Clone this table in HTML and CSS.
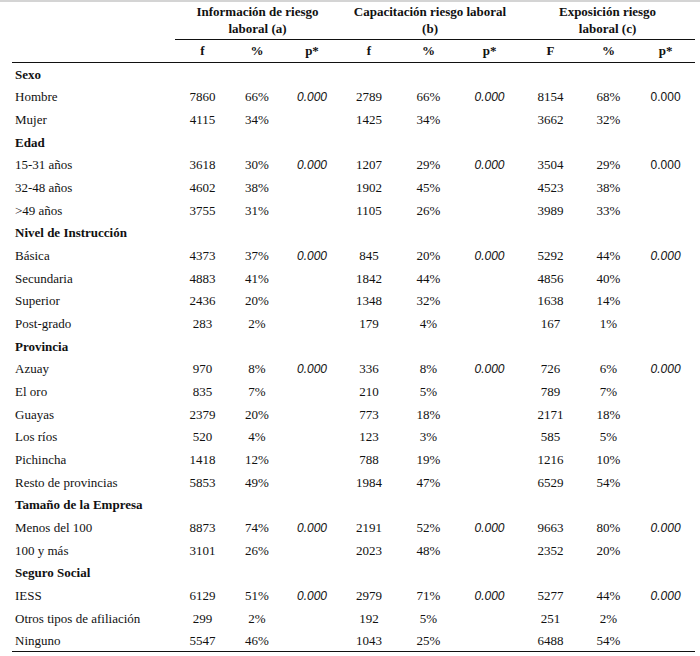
FILE: index.html
```html
<!DOCTYPE html>
<html lang="es">
<head>
<meta charset="utf-8">
<title>Tabla riesgo laboral</title>
<link rel="stylesheet" href="styles.css">
</head>
<body>
<div class="topline"></div>
<table class="tbl">
  <colgroup>
    <col class="c-label">
    <col class="c1"><col class="c2"><col class="c3">
    <col class="c4"><col class="c5"><col class="c6">
    <col class="c7"><col class="c8"><col class="c9">
  </colgroup>
  <thead>
    <tr class="group-row">
      <th class="blank"></th>
      <th colspan="3" class="group">Información de riesgo<br>laboral (a)</th>
      <th colspan="3" class="group">Capacitación riesgo laboral<br>(b)</th>
      <th colspan="3" class="group">Exposición riesgo<br>laboral (c)</th>
    </tr>
    <tr class="sub-row">
      <th></th>
      <th>f</th><th>%</th><th>p*</th>
      <th>f</th><th>%</th><th>p*</th>
      <th>F</th><th>%</th><th>p*</th>
    </tr>
  </thead>
  <tbody>
    <tr class="cat"><td>Sexo</td><td colspan="9"></td></tr>
    <tr><td>Hombre</td><td>7860</td><td>66%</td><td class="p">0.000</td><td>2789</td><td>66%</td><td class="p">0.000</td><td>8154</td><td>68%</td><td class="ps">0.000</td></tr>
    <tr><td>Mujer</td><td>4115</td><td>34%</td><td></td><td>1425</td><td>34%</td><td></td><td>3662</td><td>32%</td><td></td></tr>
    <tr class="cat"><td>Edad</td><td colspan="9"></td></tr>
    <tr><td>15-31 años</td><td>3618</td><td>30%</td><td class="p">0.000</td><td>1207</td><td>29%</td><td class="p">0.000</td><td>3504</td><td>29%</td><td class="ps">0.000</td></tr>
    <tr><td>32-48 años</td><td>4602</td><td>38%</td><td></td><td>1902</td><td>45%</td><td></td><td>4523</td><td>38%</td><td></td></tr>
    <tr><td>&gt;49 años</td><td>3755</td><td>31%</td><td></td><td>1105</td><td>26%</td><td></td><td>3989</td><td>33%</td><td></td></tr>
    <tr class="cat"><td>Nivel de Instrucción</td><td colspan="9"></td></tr>
    <tr><td>Básica</td><td>4373</td><td>37%</td><td class="p">0.000</td><td>845</td><td>20%</td><td class="p">0.000</td><td>5292</td><td>44%</td><td class="p">0.000</td></tr>
    <tr><td>Secundaria</td><td>4883</td><td>41%</td><td></td><td>1842</td><td>44%</td><td></td><td>4856</td><td>40%</td><td></td></tr>
    <tr><td>Superior</td><td>2436</td><td>20%</td><td></td><td>1348</td><td>32%</td><td></td><td>1638</td><td>14%</td><td></td></tr>
    <tr><td>Post-grado</td><td>283</td><td>2%</td><td></td><td>179</td><td>4%</td><td></td><td>167</td><td>1%</td><td></td></tr>
    <tr class="cat"><td>Provincia</td><td colspan="9"></td></tr>
    <tr><td>Azuay</td><td>970</td><td>8%</td><td class="p">0.000</td><td>336</td><td>8%</td><td class="p">0.000</td><td>726</td><td>6%</td><td class="p">0.000</td></tr>
    <tr><td>El oro</td><td>835</td><td>7%</td><td></td><td>210</td><td>5%</td><td></td><td>789</td><td>7%</td><td></td></tr>
    <tr><td>Guayas</td><td>2379</td><td>20%</td><td></td><td>773</td><td>18%</td><td></td><td>2171</td><td>18%</td><td></td></tr>
    <tr><td>Los ríos</td><td>520</td><td>4%</td><td></td><td>123</td><td>3%</td><td></td><td>585</td><td>5%</td><td></td></tr>
    <tr><td>Pichincha</td><td>1418</td><td>12%</td><td></td><td>788</td><td>19%</td><td></td><td>1216</td><td>10%</td><td></td></tr>
    <tr><td>Resto de provincias</td><td>5853</td><td>49%</td><td></td><td>1984</td><td>47%</td><td></td><td>6529</td><td>54%</td><td></td></tr>
    <tr class="cat"><td>Tamaño de la Empresa</td><td colspan="9"></td></tr>
    <tr><td>Menos del 100</td><td>8873</td><td>74%</td><td class="p">0.000</td><td>2191</td><td>52%</td><td class="p">0.000</td><td>9663</td><td>80%</td><td class="p">0.000</td></tr>
    <tr><td>100 y más</td><td>3101</td><td>26%</td><td></td><td>2023</td><td>48%</td><td></td><td>2352</td><td>20%</td><td></td></tr>
    <tr class="cat"><td>Seguro Social</td><td colspan="9"></td></tr>
    <tr><td>IESS</td><td>6129</td><td>51%</td><td class="p">0.000</td><td>2979</td><td>71%</td><td class="p">0.000</td><td>5277</td><td>44%</td><td class="p">0.000</td></tr>
    <tr><td>Otros tipos de afiliación</td><td>299</td><td>2%</td><td></td><td>192</td><td>5%</td><td></td><td>251</td><td>2%</td><td></td></tr>
    <tr class="last"><td>Ninguno</td><td>5547</td><td>46%</td><td></td><td>1043</td><td>25%</td><td></td><td>6488</td><td>54%</td><td></td></tr>
  </tbody>
</table>
</body>
</html>
```

FILE: styles.css
```css
html, body {
  margin: 0;
  padding: 0;
  background: #ffffff;
}

body {
  font-family: "Liberation Serif", "Times New Roman", serif;
  font-size: 13px;
  color: #111111;
}

.topline {
  height: 2px;
  background: #d4d4d4;
}

.tbl {
  margin-left: 12px;
  width: 683px;
  border-collapse: collapse;
  table-layout: fixed;
  border-bottom: 1.5px solid #111;
}

.c-label { width: 163px; }
.c1 { width: 55px; }
.c2 { width: 54px; }
.c3 { width: 56px; }
.c4 { width: 58px; }
.c5 { width: 61px; }
.c6 { width: 61px; }
.c7 { width: 61px; }
.c8 { width: 55px; }
.c9 { width: 59px; }

th, td {
  padding: 0;
  text-align: center;
}

th {
  font-weight: bold;
  vertical-align: middle;
}

.group-row th {
  height: 35px;
  line-height: 17px;
}

.group-row .group {
  border-bottom: 1.5px solid #111;
  padding-bottom: 2px;
}

.sub-row th {
  height: 22px;
  border-bottom: 1.5px solid #111;
}

tbody tr {
  height: 22.68px;
}

tbody td {
  line-height: 15px;
  padding: 4px 0 0;
  vertical-align: baseline;
}

tbody td:first-child {
  text-align: left;
  padding-left: 3px;
}

.cat td:first-child {
  font-weight: bold;
}

.p {
  font-family: "Liberation Sans", Arial, sans-serif;
  font-style: italic;
  font-size: 12px;
}

.ps {
  font-family: "Liberation Sans", Arial, sans-serif;
  font-size: 12px;
}
```
